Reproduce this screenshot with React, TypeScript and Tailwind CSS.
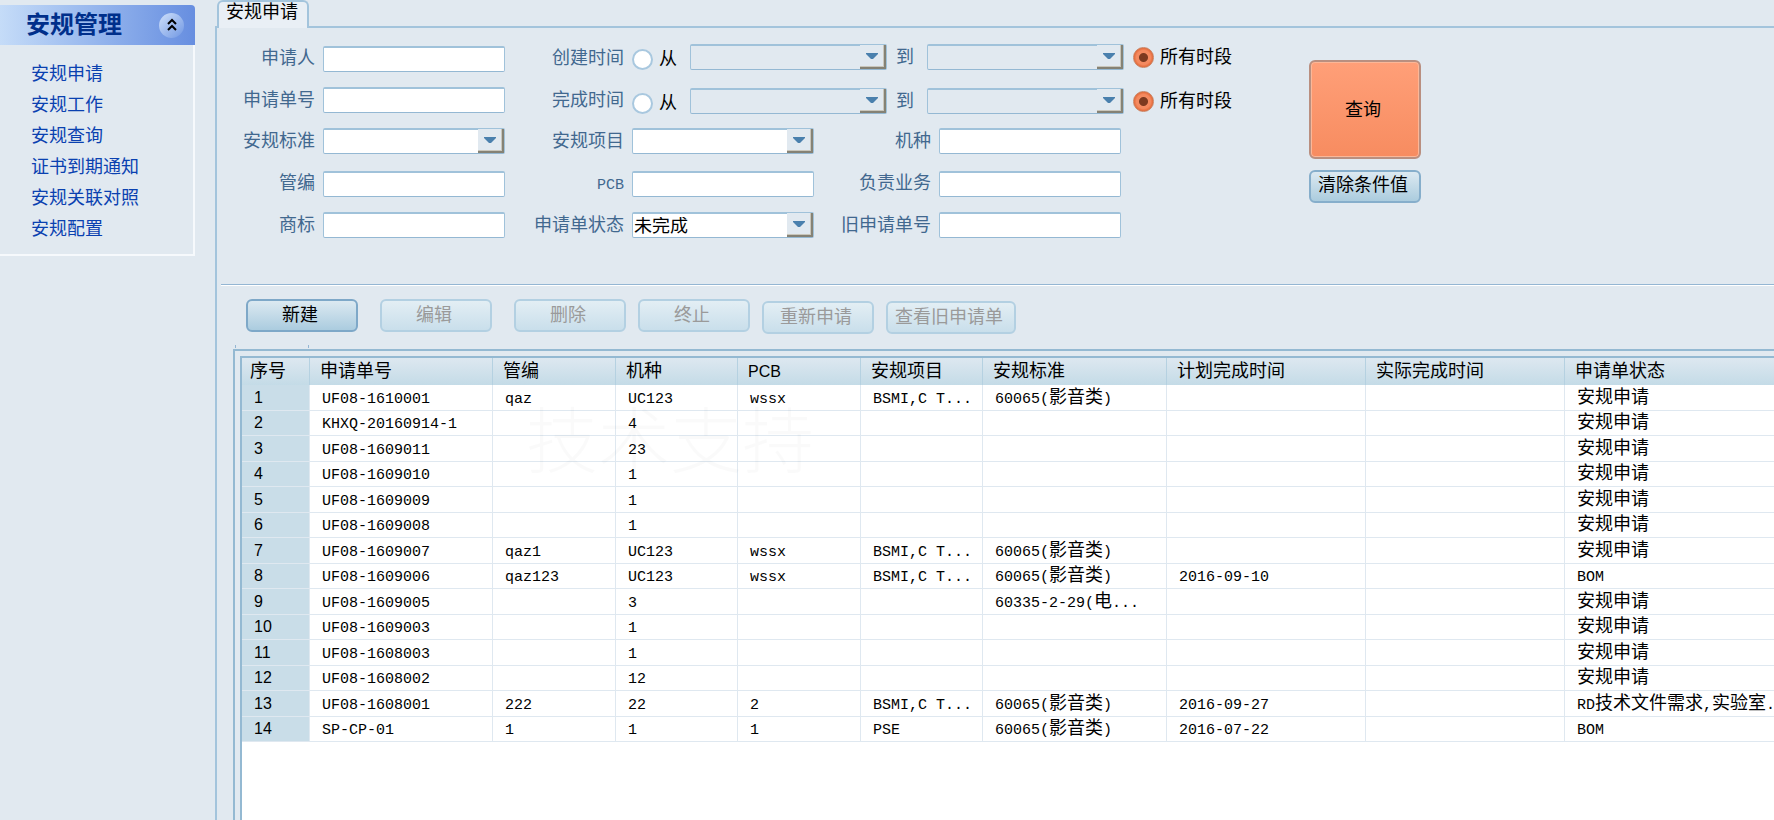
import React from 'react';
import clsx from 'clsx';

interface Application {
  code: string;
  tube?: string;
  model?: string;
  pcb?: string;
  project?: string;
  standard?: string;
  planned?: string;
  actual?: string;
  status: string;
}

const menuItems = ['安规申请', '安规工作', '安规查询', '证书到期通知', '安规关联对照', '安规配置'];

const columns: { key: keyof Application; title: string; width: string }[] = [
  { key: 'code', title: '申请单号', width: 'w-[183px]' },
  { key: 'tube', title: '管编', width: 'w-[123px]' },
  { key: 'model', title: '机种', width: 'w-[122px]' },
  { key: 'pcb', title: 'PCB', width: 'w-[123px]' },
  { key: 'project', title: '安规项目', width: 'w-[122px]' },
  { key: 'standard', title: '安规标准', width: 'w-[184px]' },
  { key: 'planned', title: '计划完成时间', width: 'w-[199px]' },
  { key: 'actual', title: '实际完成时间', width: 'w-[199px]' },
  { key: 'status', title: '申请单状态', width: '' }
];

const applications: Application[] = [
  { code: 'UF08-1610001', tube: 'qaz', model: 'UC123', pcb: 'wssx', project: 'BSMI,C T...', standard: '60065(影音类)', status: '安规申请' },
  { code: 'KHXQ-20160914-1', model: '4', status: '安规申请' },
  { code: 'UF08-1609011', model: '23', status: '安规申请' },
  { code: 'UF08-1609010', model: '1', status: '安规申请' },
  { code: 'UF08-1609009', model: '1', status: '安规申请' },
  { code: 'UF08-1609008', model: '1', status: '安规申请' },
  { code: 'UF08-1609007', tube: 'qaz1', model: 'UC123', pcb: 'wssx', project: 'BSMI,C T...', standard: '60065(影音类)', status: '安规申请' },
  { code: 'UF08-1609006', tube: 'qaz123', model: 'UC123', pcb: 'wssx', project: 'BSMI,C T...', standard: '60065(影音类)', planned: '2016-09-10', status: 'BOM' },
  { code: 'UF08-1609005', model: '3', standard: '60335-2-29(电...', status: '安规申请' },
  { code: 'UF08-1609003', model: '1', status: '安规申请' },
  { code: 'UF08-1608003', model: '1', status: '安规申请' },
  { code: 'UF08-1608002', model: '12', status: '安规申请' },
  { code: 'UF08-1608001', tube: '222', model: '22', pcb: '2', project: 'BSMI,C T...', standard: '60065(影音类)', planned: '2016-09-27', status: 'RD技术文件需求,实验室...' },
  { code: 'SP-CP-01', tube: '1', model: '1', pcb: '1', project: 'PSE', standard: '60065(影音类)', planned: '2016-07-22', status: 'BOM' }
];

// Latin runs are set smaller than the Chinese ones, two letters per character
const MixedText = ({ text }: { text: string }) => (
  <>
    {text.split(/([\x20-\x7e]+)/).filter(Boolean).map((run, i) =>
      /^[\x20-\x7e]/.test(run) ? (
        <span key={i} className="font-['Liberation_Mono',monospace] text-[15px] leading-none">{run}</span>
      ) : (
        run
      )
    )}
  </>
);

const boxClass =
  'h-[26px] w-full rounded-[2px] border border-t-2 border-[#a0c2da] border-b-[#94b8d3] text-lg leading-none text-black outline-none';

const Label = ({ id, children }: { id: string; children: string }) => (
  <label htmlFor={id} className="justify-self-end whitespace-nowrap pr-2 text-[#41688f]">
    <MixedText text={children} />
  </label>
);

const TextField = ({ id, label }: { id: string; label: string }) => (
  <>
    <Label id={id}>{label}</Label>
    <input id={id} type="text" className={clsx(boxClass, 'self-end bg-white px-1')} />
  </>
);

interface ComboProps {
  id: string;
  value?: string;
  disabled?: boolean;
  label?: string;
}

const Combo = ({ id, value = '', disabled, label }: ComboProps) => (
  <div className="relative h-[26px] w-full">
    <select
      id={id}
      aria-label={label}
      disabled={disabled}
      defaultValue={value}
      className={clsx(boxClass, 'appearance-none pl-px pr-7 opacity-100', disabled ? 'bg-transparent' : 'bg-white')}
    >
      <option value={value}>{value}</option>
    </select>
    <span className="pointer-events-none absolute inset-y-px right-px flex w-[26px] items-center justify-center border-b-2 border-r-2 border-[#858275] bg-[#e1e9f0] shadow-[inset_-1px_-1px_0_#c9c6bb]">
      <svg width="14" height="8" viewBox="0 0 14 8" className="mb-px">
        <path d="M1 1h12v1L8 7H6L1 2z" fill="#4a80ad" />
      </svg>
    </span>
  </div>
);

const ComboField = ({ id, label, value }: { id: string; label: string; value?: string }) => (
  <>
    <Label id={id}>{label}</Label>
    <Combo id={id} value={value} />
  </>
);

const DateRange = ({ name, label }: { name: string; label: string }) => (
  <>
    <span className="justify-self-end whitespace-nowrap pr-2 text-[#41688f]">{label}</span>
    <div className="col-span-3 flex w-max items-center self-start">
      <label className="mr-[13px] flex items-center gap-[6px] pt-1 text-black">
        <input
          type="radio"
          name={name}
          className="size-[21px] appearance-none rounded-full border-2 border-[#a9c8df] bg-white"
        />
        从
      </label>
      <div className="w-[197px] shrink-0">
        <Combo id={`${name}-from`} label={`${label}从`} disabled />
      </div>
      <span className="w-10 shrink-0 pl-[9px] text-[#41688f]">到</span>
      <div className="w-[197px] shrink-0">
        <Combo id={`${name}-to`} label={`${label}到`} disabled />
      </div>
      <label className="ml-[9px] flex items-center gap-[6px] whitespace-nowrap text-black">
        <input
          type="radio"
          name={name}
          defaultChecked
          className="size-[21px] appearance-none rounded-full border border-[#c9805f] bg-[radial-gradient(circle,#7d3a20_0_4px,#f48a60_5px_7px,#e2622f_10px)]"
        />
        所有时段
      </label>
    </div>
  </>
);

const Sidebar = () => (
  <aside className="w-[195px] shrink-0 pt-[5px]">
    <div className="flex h-10 items-center justify-between rounded-tr-[4px] bg-linear-to-r from-[#c5dcf8] to-[#678ee0] pl-[26px] pr-[11px]">
      <h1 className="text-2xl font-bold leading-8 text-[#002f8b]">安规管理</h1>
      <button
        type="button"
        aria-label="收起"
        className="flex size-[25px] items-center justify-center rounded-full bg-[linear-gradient(135deg,#cfe0fa,#7097e3)]"
      >
        <svg width="10" height="14" viewBox="0 0 10 14" fill="none" stroke="#000" strokeWidth="2">
          <path d="M1 6l4-4 4 4M1 12l4-4 4 4" />
        </svg>
      </button>
    </div>
    <nav className="border-b-2 border-r-2 border-[#f6f9fc] pb-[9px] pl-[31px] pt-[14px]">
      <ul>
        {menuItems.map(item => (
          <li key={item} className="h-[31px] leading-[31px]">
            <a href="#" className="text-[#0a41b0]">{item}</a>
          </li>
        ))}
      </ul>
    </nav>
  </aside>
);

const SearchForm = () => (
  <form className="flex items-start pt-[15px]">
    <div className="grid grid-cols-[106px_182px_127px_182px_125px_182px] grid-rows-[29px_26px_26px_28px_26px] items-center gap-y-[15px]">
      <TextField id="applicant" label="申请人" />
      <DateRange name="created" label="创建时间" />
      <TextField id="code" label="申请单号" />
      <DateRange name="finished" label="完成时间" />
      <ComboField id="standard" label="安规标准" />
      <ComboField id="project" label="安规项目" />
      <TextField id="model" label="机种" />
      <TextField id="tube" label="管编" />
      <TextField id="pcb" label="PCB" />
      <TextField id="owner" label="负责业务" />
      <TextField id="brand" label="商标" />
      <ComboField id="status" label="申请单状态" value="未完成" />
      <TextField id="oldcode" label="旧申请单号" />
    </div>
    <div className="ml-[188px] mt-[17px] flex w-28 flex-col gap-[11px] text-black">
      <button
        type="button"
        className="h-[99px] rounded-[6px] border-2 border-[#b98f80] bg-linear-to-b from-[#ff9f78] to-[#f78c60] pr-1 shadow-[inset_0_0_0_1px_#fbb798]"
      >
        查询
      </button>
      <button
        type="reset"
        className="h-[33px] rounded-[6px] border-2 border-[#86aecb] bg-linear-to-b from-[#dce9f1] to-[#abccde] pb-1 pr-1 leading-none"
      >
        清除条件值
      </button>
    </div>
  </form>
);

const ToolButton = ({ wide, disabled, children }: { wide?: boolean; disabled?: boolean; children: string }) => (
  <button
    type="button"
    disabled={disabled}
    className={clsx(
      'h-[33px] whitespace-nowrap rounded-[6px] border-2 bg-linear-to-b pb-px pr-1 leading-none',
      wide ? 'w-[130px]' : 'w-28',
      disabled
        ? 'border-[#b3d0e2] from-[#e3eef4] to-[#c9dfeb] text-[#9a9a9a]'
        : 'border-[#7ea8c8] from-[#dce9f1] to-[#abccdf] text-black'
    )}
  >
    {children}
  </button>
);

const Toolbar = () => (
  <div className="flex gap-3 pl-[29px] pt-[13px]">
    <div className="flex gap-[22px]">
      <ToolButton>新建</ToolButton>
      <ToolButton disabled>编辑</ToolButton>
      <ToolButton disabled>删除</ToolButton>
    </div>
    <ToolButton disabled>终止</ToolButton>
    <div className="flex gap-3 pt-[2px]">
      <ToolButton disabled>重新申请</ToolButton>
      <ToolButton wide disabled>查看旧申请单</ToolButton>
    </div>
  </div>
);

const ApplicationTable = () => (
  <table className="w-full table-fixed border-separate border-spacing-0 text-left text-black">
    <thead>
      <tr className="h-[27px] bg-linear-to-b from-[#dde8f0] to-[#c4dbe7]">
        <th className="w-[68px] border-r border-[#b5d1e1] p-0 pl-2 font-normal leading-[27px]">序号</th>
        {columns.map(col => (
          <th
            key={col.key}
            className={clsx('overflow-hidden whitespace-nowrap border-r border-[#b5d1e1] p-0 pl-[10px] font-normal leading-[27px] last:border-r-0', col.width)}
          >
            {col.title === 'PCB' ? <span className="text-base leading-none">PCB</span> : col.title}
          </th>
        ))}
      </tr>
    </thead>
    <tbody>
      {applications.map((row, i) => (
        <tr key={row.code} className="odd:h-[26px] even:h-[25px]">
          <td className="border-b border-r border-[#dfe8f0] bg-[#c9dde8] p-0 pl-3 text-base leading-5">{i + 1}</td>
          {columns.map(col => (
            <td
              key={col.key}
              className="overflow-hidden whitespace-nowrap border-b border-r border-[#dfe8f0] p-0 pb-[2px] pl-3 leading-5 last:border-r-0"
            >
              <MixedText text={row[col.key] ?? ''} />
            </td>
          ))}
        </tr>
      ))}
    </tbody>
  </table>
);

const App: React.FC = () => (
  <div className="flex h-screen overflow-hidden bg-[#e1e9f0] font-['Liberation_Sans','Noto_Sans_CJK_SC',sans-serif] text-lg leading-6">
    <Sidebar />
    <main className="ml-5 flex min-w-0 flex-1 flex-col">
      <div className="flex h-7">
        <div className="w-[2px] border-b-2 border-[#a3c4dc]" />
        <button
          type="button"
          className="w-[92px] rounded-t-[6px] border-x-2 border-t-2 border-[#a3c4dc] bg-[#e9eff5] pb-[6px] pr-[2px] leading-none text-black"
        >
          安规申请
        </button>
        <div className="flex-1 border-b-2 border-[#a3c4dc]" />
      </div>
      <section className="flex min-h-0 flex-1 flex-col border-l-2 border-[#a3c4dc]">
        <SearchForm />
        <div className="ml-1 mt-[46px] h-[2px] border-t border-[#94b6d3] bg-white" />
        <Toolbar />
        <div className="ml-[18px] mt-[11px] flex h-[3px] w-[74px] justify-between border-x border-[#94b6d3]" />
        <div className="ml-4 mt-px flex min-h-0 flex-1 flex-col border-l-2 border-t-2 border-[#94b9d2] pl-[5px] pt-[5px]">
          <div className="relative flex-1 overflow-hidden border-l-2 border-t-2 border-[#94b9d2] bg-white">
            <ApplicationTable />
            <span className="pointer-events-none absolute left-[284px] top-12 text-7xl leading-none font-light text-black/2">
              技术支持
            </span>
          </div>
        </div>
      </section>
    </main>
  </div>
);

export default App;
